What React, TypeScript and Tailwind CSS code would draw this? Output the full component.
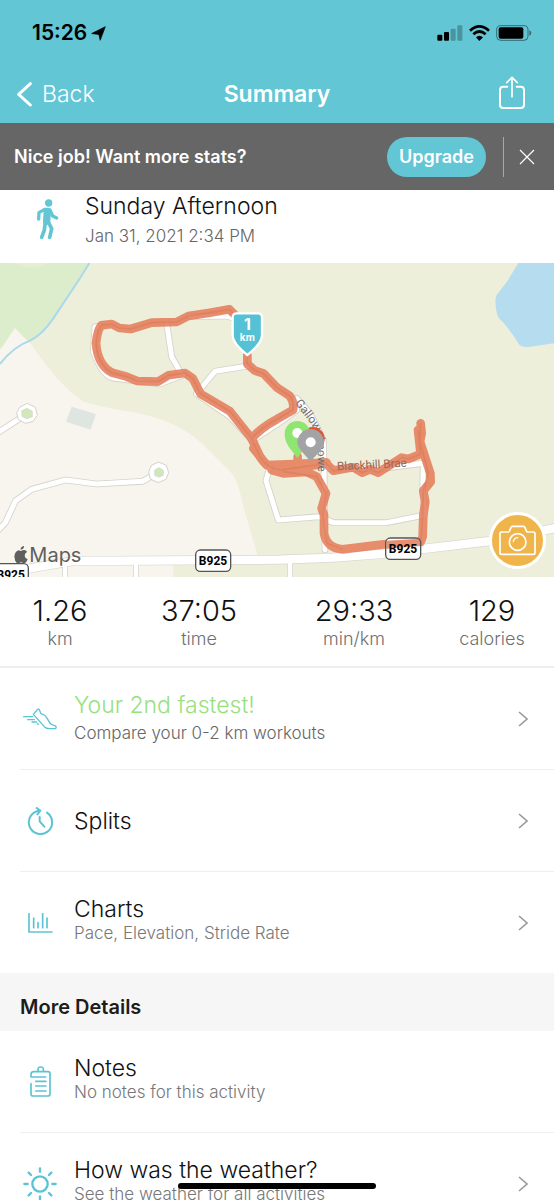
import type { ReactNode } from "react";

type StatProps = {
  value: string
  label: string
}

type RowProps = {
  icon: ReactNode
  title: string
  subtitle?: string
  highlight?: boolean
  chevron?: boolean
}

const stats = [
  { value: "1.26", label: "km" },
  { value: "37:05", label: "time" },
  { value: "29:33", label: "min/km" },
  { value: "129", label: "calories" },
];

function StatusBar() {
  return (
    <div className="flex h-[66px] items-center justify-between pl-8 pr-[22px] text-black">
      <div className="flex items-center gap-1">
        <span className="text-[21px] font-semibold">15:26</span>
        <svg className="h-[15px] w-[15px]" viewBox="0 0 42 44">
          <path d="M1 22 41 2 26 42 22 25Z" fill="currentColor" stroke="currentColor" strokeWidth="2" strokeLinejoin="round" />
        </svg>
      </div>
      <div className="flex items-center gap-[6px]">
        <svg className="h-4 w-[26px]" viewBox="0 0 78 48">
          <rect x="1" y="29" width="15" height="18" rx="3" />
          <rect x="21" y="21" width="15" height="26" rx="3" />
          <rect x="41" y="11" width="15" height="36" rx="3" opacity=".25" />
          <rect x="61" y="1" width="15" height="46" rx="3" opacity=".25" />
        </svg>
        <svg className="h-4 w-[21px]" viewBox="0 0 63 48">
          <g fill="none" stroke="currentColor" strokeWidth="8">
            <path d="M3 17Q31 -9 60 17" />
            <path d="M13 28Q31 11 50 28" />
          </g>
          <path d="M21 37Q31 28 42 37L31 48Z" />
        </svg>
        <svg className="h-4 w-9" viewBox="0 0 108 48">
          <rect x="2" y="2" width="94" height="44" rx="12" fill="none" stroke="currentColor" strokeWidth="3" opacity=".45" />
          <rect x="8" y="7" width="74" height="34" rx="6" />
          <path d="M100 16Q106 18 106 24T100 32Z" opacity=".45" />
        </svg>
      </div>
    </div>
  )
}

function NavBar() {
  return (
    <div className="grid h-[57px] grid-cols-3 items-center pl-4 pr-7 text-white">
      <button className="flex items-center gap-[10px] text-[23px] font-light">
        <svg className="h-[26px] w-4" viewBox="0 0 48 78" fill="none" stroke="currentColor" strokeWidth="9" strokeLinecap="round" strokeLinejoin="round">
          <path d="M43 5 8 37 43 69" />
        </svg>
        Back
      </button>
      <h1 className="pl-3 text-center text-[23px] font-semibold">Summary</h1>
      <button aria-label="Share" className="justify-self-end pb-1">
        <svg className="h-[34px] w-[28px]" viewBox="0 0 84 102" fill="none" stroke="currentColor" strokeWidth="6" strokeLinecap="round" strokeLinejoin="round">
          <path d="M28 32H16Q6 32 6 42V86Q6 96 16 96H68Q78 96 78 86V42Q78 32 68 32H56" />
          <path d="M42 62V4M26 20 42 4 58 20" strokeWidth="5" />
        </svg>
      </button>
    </div>
  )
}

function UpgradeBanner() {
  return (
    <div className="flex h-[67px] items-center bg-[#666666] pl-[14px] pr-[19px] text-white">
      <p className="flex-1 text-lg font-semibold">Nice job! Want more stats?</p>
      <button className="h-10 w-[99px] rounded-full bg-[#62c6d5] text-lg font-semibold">Upgrade</button>
      <div className="ml-[17px] h-10 w-px bg-[#a8a8a8]" />
      <button aria-label="Close" className="ml-[15px]">
        <svg className="h-4 w-4" viewBox="0 0 16 16" stroke="currentColor" strokeWidth="1.2">
          <path d="M1 1 15 15M15 1 1 15" />
        </svg>
      </button>
    </div>
  )
}

function ActivityTitle() {
  return (
    <div className="flex h-[73px] pl-[36px]">
      <svg className="mt-2 h-[42px] w-[23px] shrink-0" viewBox="0 0 69 126">
        <circle cx="38" cy="15" r="11" fill="#62c6d5" />
        <g fill="none" stroke="#62c6d5" strokeLinecap="round" strokeLinejoin="round">
          <path d="M34 40 32 70" strokeWidth="22" />
          <path d="M26 34 9 44 8 63M42 36 50 54 62 60" strokeWidth="10" />
          <path d="M28 72 25 96 17 118M37 72 47 92 41 118" strokeWidth="11" />
        </g>
      </svg>
      <div className="ml-[26px]">
        <h2 className="text-[23px] font-light leading-8 text-[#111111]">Sunday Afternoon</h2>
        <p className="text-[17px] font-light leading-7 text-[#666666]">Jan 31, 2021 2:34 PM</p>
      </div>
    </div>
  )
}

const roads = [
  "M-10 520 60 475M-10 815 15 790 47 722 95 688 197 660 290 672 428 664 476 636",
  "M500 190 515 290 540 335M590 400 645 334 745 318",
  "M300 200 285 200 280 275Q310 355 345 355L480 372 550 345M590 402 690 470 760 545",
  "M760 540 850 480 890 450 885 420M810 620 798 662 835 780 957 770 1000 788 1160 788 1275 765 1268 700 1270 610M972 630 975 870",
  "M890 415 930 460 970 540 972 625 1150 625 1270 610",
  "M570 170 680 168 720 180 745 300",
];

const route = "M742 285V312L765 332 790 340 830 382 868 407Q884 425 879 450L830 478Q780 505 755 536";
const loop = "M705 165 688 148 630 158 565 168 530 186 455 188 392 207 358 204 335 192 304 196Q292 210 288 250 293 315 336 338L380 350 412 363 474 365 505 346 555 339 578 355 602 402 690 454 755 536 780 590Q800 625 842 630L875 625 950 615 975 607 1000 632 1060 622 1086 638 1110 628 1135 638 1205 593 1225 597 1262 582 1254 510";

function RoadShield({ x, y }: { x: number, y: number }) {
  return (
    <g>
      <rect x={x} y={y} width="105" height="64" rx="14" fill="#ffffff" stroke="#555555" strokeWidth="4" />
      <text x={x + 52} y={y + 45} textAnchor="middle" fontSize="36" className="font-['Liberation_Sans_Narrow','Roboto',sans-serif] font-bold">B925</text>
    </g>
  )
}

function RouteMap() {
  return (
    <div className="relative h-[314px] overflow-hidden bg-[#edefda]">
      <svg className="h-full w-full" viewBox="0 9 1662 942" preserveAspectRatio="xMidYMid slice" role="img" aria-label="Route map">
        <rect y="9" width="1662" height="942" fill="#edefda" />
        <path d="M0 9H270L150 190Q125 225 80 247L45 205 0 270Z" fill="#dcedcb" />
        <path d="M45 9Q95 38 145 9Z" fill="#e6edd0" />
        <path d="M0 270 45 205 95 255Q175 375 250 425 320 445 400 457 520 478 600 545L700 645Q720 685 730 740L772 885 520 895V951H0Z" fill="#f8f5ee" />
        <path d="M268 9 240 55 158 178Q125 225 90 242 40 260 0 312" fill="none" stroke="#a9d9ec" strokeWidth="6" />
        <path d="M215 440 288 462 272 509 198 485Z" fill="#dfe6e2" />
        <path d="M1555 9 1523 62 1490 105Q1483 120 1489 150 1491 175 1508 185 1530 210 1558 254 1568 263 1590 260L1662 250V9Z" fill="#b5ddef" />

        {/* roads: grey casing first, white on top */}
        <g fill="none" strokeLinejoin="round" strokeLinecap="round">
          {roads.map((d) => <path key={d} d={d} stroke="#d3d2cb" strokeWidth="20" />)}
          <path d="M195 905V960M408 905V960M870 900V960" stroke="#d8d7d0" strokeWidth="18" />
          <path d="M-10 950 90 925 220 903 840 899 1000 893 1140 882 1480 842 1670 803" stroke="#d8d7d0" strokeWidth="29" />
          {roads.map((d) => <path key={d} d={d} stroke="#ffffff" strokeWidth="15" />)}
          <path d="M195 905V960M408 905V960M870 900V960" stroke="#ffffff" strokeWidth="13" />
          <path d="M-10 950 90 925 220 903 840 899 1000 893 1140 882 1480 842 1670 803" stroke="#ffffff" strokeWidth="25" />
        </g>
        <path d="M60 441 82 430 106 442 112 466 99 484 76 490 55 479 50 458Z" fill="#ffffff" stroke="#d3d2cb" strokeWidth="3" />
        <path d="M65 452 81 445 97 454V470L80 476 66 469Z" fill="#d2e8bb" stroke="#d3d2cb" strokeWidth="2" />
        <path d="M454 616 476 606 499 616 506 638 498 658 474 668 451 657 446 636Z" fill="#ffffff" stroke="#d3d2cb" strokeWidth="3" />
        <path d="M464 630 477 623 490 631V646L476 652 464 646Z" fill="#cfe8ba" stroke="#d3d2cb" strokeWidth="2" />

        <RoadShield x={587} y={870} />
        <RoadShield x={-20} y={911} />

        <g fill="none" stroke="#e57b58" strokeLinejoin="round" strokeLinecap="round" opacity=".85">
          <path d={route} strokeWidth="26" />
          <path d={loop} strokeWidth="26" />
          <path d="M1262 490 1265 520 1260 545 1291 640 1292 665 1270 692 1276 725 1270 765 1268 830 1262 846 1150 853 1028 868Q980 865 972 820L972 765 965 745 978 700 950 650 920 636 850 640 815 630M893 590V625M760 565 800 615 880 612 980 608" strokeWidth="26" />
        </g>
        <g fill="none" stroke="#d46d4e" strokeLinejoin="round" strokeWidth="5" opacity=".35">
          <path d={route} />
          <path d={loop} />
          <path d="M1262 490 1260 545 1285 640 1270 692 1268 765 1263 846M1028 868 980 850 968 765 978 700 950 650 850 635" />
        </g>

        {/* this shield sits on the route, the line shows through its upper half */}
        <rect x="1157" y="834" width="105" height="64" rx="14" fill="#ffffff" />
        <path d="M1159 842 1262 836V858L1159 866Z" fill="#e57b58" opacity=".85" />
        <rect x="1157" y="834" width="105" height="64" rx="14" fill="none" stroke="#555555" strokeWidth="4" />
        <text x="1209" y="879" textAnchor="middle" fontSize="36" className="font-['Liberation_Sans_Narrow','Roboto',sans-serif] font-bold">B925</text>

        <defs>
          <path id="gallows" d="M884 430Q934 488 948 520 954 550 954 660" />
        </defs>
        <g fontSize="35" className="font-['Roboto',sans-serif]">
          <text fill="#6f6f70"><textPath href="#gallows">Gallowsknowe</textPath></text>
          <text x="1012" y="631" fill="#96695c" transform="rotate(-3 1012 631)">Blackhill Brae</text>
        </g>

        {/* start and finish pins */}
        <circle cx="938" cy="537" r="36" fill="#e2532d" />
        <path d="M892 594C873 568 854 551 854 521A38 38 0 0 1 930 521C930 551 911 568 892 594Z" fill="#8fe572" />
        <circle cx="892" cy="519" r="15" fill="#ffffff" />
        <path d="M932 606C912 580 892 565 892 547A40 40 0 0 1 972 547C972 567 950 580 932 606Z" fill="#a3a2a4" />
        <circle cx="932" cy="547" r="15" fill="#ffffff" />

        <path d="M710 160H774Q786 160 786 172V225Q786 250 742 285 698 250 698 225V172Q698 160 710 160Z" fill="#55c1d4" stroke="#ffffff" strokeWidth="7" strokeLinejoin="round" />
        <g fill="#ffffff" textAnchor="middle" className="font-bold">
          <text x="742" y="209" fontSize="48">1</text>
          <text x="742" y="243" fontSize="30">km</text>
        </g>

        <g fill="#5f5f5d">
          <path d="M63 873Q70 869 76 871 80 873 81 876 74 880 74 887 75 895 83 898 80 907 74 910 70 910 63 907 56 911 51 910 44 903 43 890 45 873 56 871ZM62 869Q61 860 72 858 73 867 62 869Z" />
          <text x="88" y="907" fontSize="60">Maps</text>
        </g>
      </svg>
      <button aria-label="Add photo" className="absolute bottom-[8px] right-[8px] flex h-[57px] w-[57px] items-center justify-center rounded-full border-3 border-white bg-[#f0b54a] text-white">
        <svg className="h-[31px] w-[37px]" viewBox="0 0 111 93" fill="none" stroke="currentColor" strokeWidth="5" strokeLinejoin="round" strokeLinecap="round">
          <path d="M8 21H28Q31 21 32 17L36 7Q37 4 41 4H73Q77 4 78 8L82 18Q83 21 87 21H103Q108 21 108 26V83Q108 88 103 88H8Q3 88 3 83V26Q3 21 8 21Z" />
          <circle cx="56" cy="51" r="25" />
          <path d="M43 50Q45 39 56 38" strokeWidth="4" />
        </svg>
      </button>
    </div>
  )
}

function Stat({ value, label }: StatProps) {
  return (
    <div className="text-center">
      <p className="text-[29px] font-light leading-8 text-[#111111]">{value}</p>
      <p className="text-lg font-light leading-6 text-[#6f6f6f]">{label}</p>
    </div>
  )
}

function Row({ icon, title, subtitle, highlight = false, chevron = true }: RowProps) {
  return (
    <li className="ml-5 border-b border-[#eeeeee] last:border-b-0">
      <button className="flex h-[101px] w-full items-center pr-[26px] text-left">
        <span className="flex w-10 shrink-0 justify-center text-[#5bc4d3]">{icon}</span>
        <span className={subtitle && !highlight ? "ml-[14px] flex flex-1 flex-col pb-1" : "ml-[14px] flex flex-1 flex-col"}>
          <span className={highlight ? "text-[23px] font-light leading-7 text-[#98df80]" : "text-[23px] font-light leading-6 text-[#111111]"}>{title}</span>
          {subtitle && (
            <span className={highlight ? "text-[17px] font-light leading-7 text-[#666666]" : "text-[17px] font-light leading-6 text-[#777777]"}>{subtitle}</span>
          )}
        </span>
        {chevron && (
          <svg className="h-4 w-[10px]" viewBox="0 0 10 16" fill="none" stroke="#999999" strokeWidth="1.6">
            <path d="M1 1 9 8 1 15" />
          </svg>
        )}
      </button>
    </li>
  )
}

function ShoeIcon() {
  return (
    <svg className="h-[22px] w-[34px]" viewBox="0 0 102 66" fill="none" stroke="currentColor" strokeWidth="4" strokeLinecap="round" strokeLinejoin="round">
      <path d="M46 3Q40 8 31 19L66 58Q70 62 78 62H98Q102 55 95 53 84 51 80 44L71 29Q68 23 61 20L54 17 49 5Z" />
      <path d="M2 26H29M14 35H34M27 42H41M43 48H46" />
    </svg>
  )
}

function SplitsIcon() {
  return (
    <svg className="h-[28px] w-[26px]" viewBox="0 0 78 84" fill="none" stroke="currentColor" strokeWidth="6" strokeLinecap="round" strokeLinejoin="round">
      <path d="M60 17A35 35 0 1 1 40 11M40 11 29 3M40 11 31 22" />
      <path d="M38 30V43L52 59" />
    </svg>
  )
}

function ChartIcon() {
  return (
    <svg className="h-5 w-[25px]" viewBox="0 0 75 60" fill="none" stroke="currentColor" strokeWidth="5" strokeLinecap="round">
      <path d="M3 2V57H72M17 15V44M30 29V44M44 2V44M57 15V44" />
    </svg>
  )
}

function NotesIcon() {
  return (
    <svg className="h-[31px] w-[21px]" viewBox="0 0 63 93" fill="none" stroke="currentColor" strokeWidth="5" strokeLinecap="round" strokeLinejoin="round">
      <path d="M3 33V25Q3 17 11 17H54Q60 17 60 23V84Q60 90 54 90H9Q3 90 3 84V53M3 33H47" />
      <path d="M24 16V8Q25 3 32 3T40 8V16M17 46H48M17 60H48M17 75H48" />
    </svg>
  )
}

function SunIcon() {
  return (
    <svg className="h-[34px] w-[34px]" viewBox="0 0 102 102" fill="none" stroke="currentColor" strokeWidth="7" strokeLinecap="round">
      <circle cx="51" cy="51" r="23" />
      <path d="M51 4V14M51 88V98M4 51H14M88 51H98M17 17 24 24M78 78 85 85M17 85 24 78M78 24 85 17" />
    </svg>
  )
}

export default function App() {
  return (
    <div className="relative flex h-screen flex-col overflow-hidden bg-white font-['Inter',sans-serif]">
      <header className="shrink-0 bg-[#62c6d5]">
        <StatusBar />
        <NavBar />
      </header>
      <UpgradeBanner />

      <main className="min-h-0 flex-1 overflow-hidden">
        <ActivityTitle />
        <RouteMap />

        <section className="grid h-[91px] grid-cols-[120fr_158fr_152fr_124fr] border-b-2 border-[#eeeeee] pt-[18px]">
          {stats.map((stat) => (
            <Stat key={stat.label} value={stat.value} label={stat.label} />
          ))}
        </section>

        <ul>
          <Row icon={<ShoeIcon />} title="Your 2nd fastest!" subtitle="Compare your 0-2 km workouts" highlight />
          <Row icon={<SplitsIcon />} title="Splits" />
          <Row icon={<ChartIcon />} title="Charts" subtitle="Pace, Elevation, Stride Rate" />
        </ul>

        <h3 className="bg-[#f6f6f6] px-5 pb-[10px] pt-5 text-xl font-semibold leading-7 text-[#1c1c1c]">More Details</h3>

        <ul>
          <Row icon={<NotesIcon />} title="Notes" subtitle="No notes for this activity" chevron={false} />
          <Row icon={<SunIcon />} title="How was the weather?" subtitle="See the weather for all activities" />
        </ul>
      </main>

      <div className="absolute bottom-[11px] left-1/2 h-[6px] w-[198px] -translate-x-1/2 rounded-full bg-black" />
    </div>
  )
}
